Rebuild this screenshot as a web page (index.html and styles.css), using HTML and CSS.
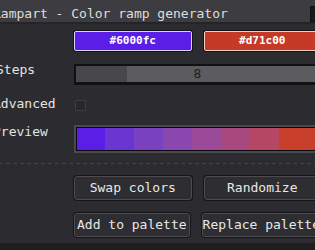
FILE: index.html
```html
<!DOCTYPE html>
<html>
<head>
<meta charset="utf-8">
<link rel="stylesheet" href="styles.css">
</head>
<body>
<div class="window">
  <div class="titlebar">
    <span class="title">Rampart - Color ramp generator</span>
    <span class="close"></span>
  </div>
  <div class="content">
    <div class="row row-colors">
      <div class="label"></div>
      <div class="pair">
        <button class="swatch swatch-blue">#6000fc</button>
        <button class="swatch swatch-red">#d71c00</button>
      </div>
    </div>
    <div class="row row-steps">
      <div class="label label-steps">Steps</div>
      <div class="slider">
        <div class="slider-fill"></div>
        <span class="slider-value">8</span>
      </div>
    </div>
    <div class="row row-advanced">
      <div class="label">Advanced</div>
      <span class="checkbox"></span>
    </div>
    <div class="row row-preview">
      <div class="label">Preview</div>
      <div class="ramp">
        <div class="ramp-inner">
          <span class="seg seg-first" style="background:#5a1ee6"></span>
          <span class="seg" style="background:#6a36d2"></span>
          <span class="seg" style="background:#7a42c0"></span>
          <span class="seg" style="background:#8a48ae"></span>
          <span class="seg" style="background:#9a4a98"></span>
          <span class="seg" style="background:#a84a80"></span>
          <span class="seg" style="background:#b64866"></span>
          <span class="seg seg-last" style="background:#c8402c"></span>
        </div>
      </div>
    </div>
    <div class="sep"></div>
    <div class="row row-btn">
      <div class="label"></div>
      <div class="pair">
        <button class="btn">Swap colors</button>
        <button class="btn">Randomize</button>
      </div>
    </div>
    <div class="row row-btn2">
      <div class="label"></div>
      <div class="pair">
        <button class="btn">Add to palette</button>
        <button class="btn">Replace palette</button>
      </div>
    </div>
  </div>
</div>
</body>
</html>
```

FILE: styles.css
```css
html, body {
  margin: 0;
  padding: 0;
}
body {
  background: #1e1e21;
  overflow: hidden;
  font-family: "DejaVu Sans Mono", "Liberation Mono", monospace;
  font-size: 13px;
  color: #e4e4e4;
}
.window {
  margin-left: -8px;
  width: 330px;
  height: 243px;
  background: #2c2c30;
}
.titlebar {
  height: 16px;
  padding-top: 6px;
  background: #3d3d41;
  border-bottom: 2px solid #252528;
  display: flex;
  align-items: flex-start;
}
.title {
  padding-left: 1px;
  line-height: 15px;
  color: #dedede;
  white-space: nowrap;
}
.close {
  margin-left: auto;
  margin-right: -2px;
  width: 12px;
  height: 14px;
  background: #1a1a1c;
  border: 1px solid #111;
}
.content {
  padding-top: 6px;
  display: flex;
  flex-direction: column;
}
.row {
  display: flex;
  align-items: flex-start;
}
.label {
  width: 81px;
  padding-left: 1px;
  flex: none;
  line-height: 14px;
  white-space: nowrap;
}
.label-steps {
  width: 78px;
  padding-left: 4px;
}
.row-colors { height: 22px; }
.row-steps { margin-top: 11px; height: 22px; }
.row-advanced { margin-top: 12px; height: 17px; }
.row-preview { margin-top: 11px; height: 28px; }
.row-btn { margin-top: 11px; height: 26px; }
.row-btn2 { margin-top: 11px; height: 26px; }

.pair {
  width: 247px;
  display: flex;
  gap: 12px;
}
.swatch {
  flex: 1;
  height: 20px;
  margin-top: 1px;
  border-radius: 2px;
  box-shadow: 0 0 0 1px #141416;
  font-family: "DejaVu Sans Mono", monospace;
  font-weight: bold;
  font-size: 11px;
  color: #ffffff;
  padding: 0;
  line-height: 16px;
  text-align: center;
}
.swatch-blue {
  background: #5a1ee6;
  border: 1px solid #d8d0ff;
}
.swatch-red {
  background: #c43a26;
  border: 1px solid #f0d0c8;
}
.slider {
  position: relative;
  width: 247px;
  height: 21px;
  box-sizing: border-box;
  margin-top: 1px;
  background: #5c5c60;
  border: 2px solid #111113;
  border-bottom-width: 3px;
  display: flex;
  align-items: center;
  justify-content: center;
}
.slider-fill {
  position: absolute;
  left: 0;
  top: 0;
  bottom: 0;
  width: 51px;
  background: #48484c;
}
.slider-value {
  position: relative;
  color: #1e1e20;
  line-height: 14px;
}
.checkbox {
  margin-top: 3px;
  margin-left: 1px;
  width: 9px;
  height: 9px;
  border: 1px solid #3e3e42;
  border-radius: 1px;
  background: #28282c;
}
.ramp {
  width: 247px;
  height: 28px;
  box-sizing: border-box;
  border: 2px solid #4a4a4e;
}
.ramp-inner {
  height: 100%;
  box-sizing: border-box;
  border: 1px solid #0a0a0c;
  display: flex;
}
.seg {
  flex: 0 0 29px;
}
.seg-first {
  flex-basis: 28px;
}
.seg-last {
  flex: 1;
}
.sep {
  margin-top: 10px;
  height: 1px;
  background: repeating-linear-gradient(to right, #47474b 0 4px, transparent 4px 7px);
}
.btn {
  flex: 1;
  height: 24px;
  margin-top: 1px;
  box-sizing: border-box;
  border: 1px solid #4c4c50;
  border-radius: 3px;
  box-shadow: 0 0 0 1px #161618;
  background: #2e2e32;
  color: #e8e8e8;
  font-family: "DejaVu Sans Mono", monospace;
  font-size: 13px;
  padding: 0;
  line-height: 14px;
  text-align: center;
  white-space: nowrap;
}
```
